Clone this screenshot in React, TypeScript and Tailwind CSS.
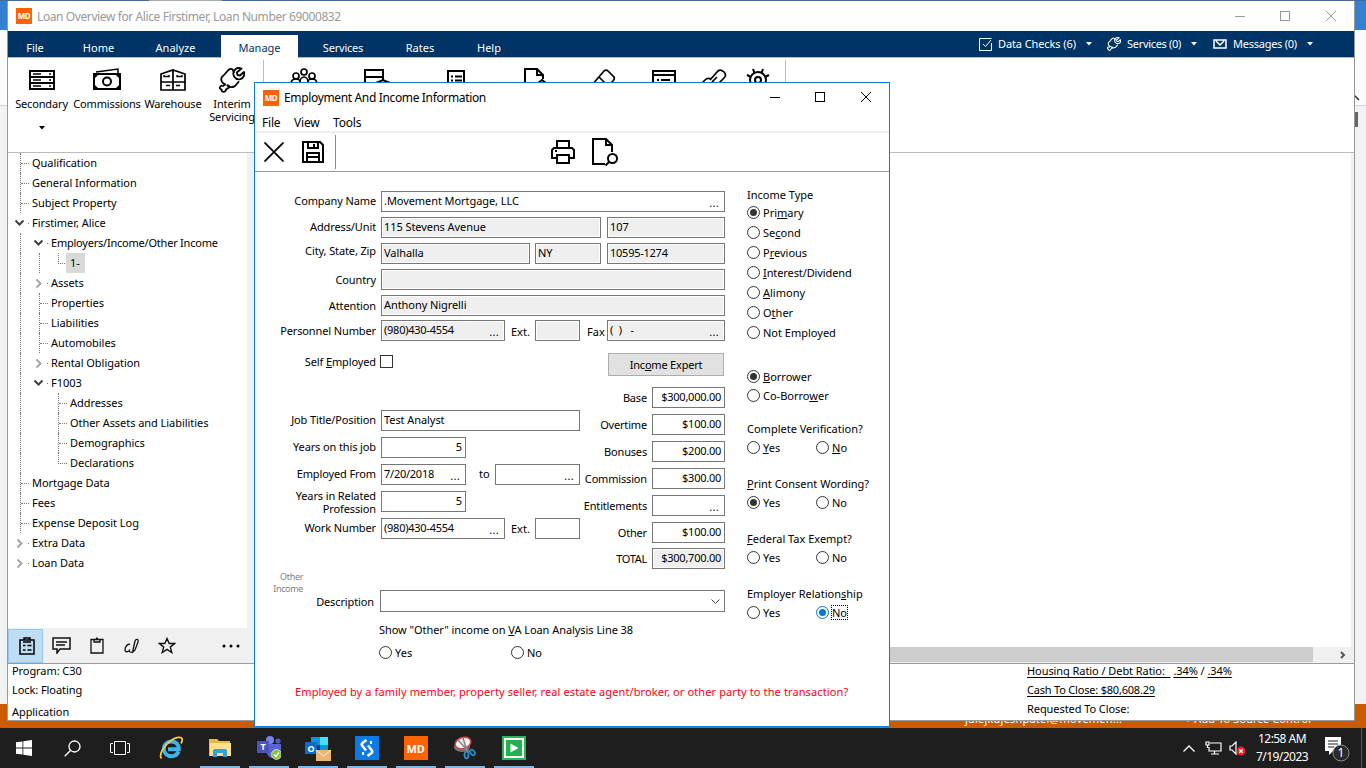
import React from "react";

type Kids = { children?: React.ReactNode };

/* ---------- text helpers ---------- */

/** Renders a caption whose "&" marks the underlined access key. */
function Mn({ t }: { t: string }) {
  const i = t.indexOf("&");
  if (i < 0) return <>{t}</>;
  return (
    <>
      {t.slice(0, i)}
      <span className="underline underline-offset-1">{t[i + 1]}</span>
      {t.slice(i + 2)}
    </>
  );
}

/* ---------- shared icons ---------- */

function MdBadge({ big = false }: { big?: boolean }) {
  return (
    <div
      className={
        big
          ? "flex size-6 items-center justify-center bg-[#ff6200] text-[11px] font-bold tracking-[-0.3px] text-white"
          : "flex size-4 items-center justify-center bg-[#ff6200] pb-px text-[8px] font-bold tracking-[-0.4px] text-white"
      }
    >
      MD
    </div>
  );
}

function Wrench({ size, width }: { size: number; width: number }) {
  return (
    <svg width={size} height={size} viewBox="0 0 26 26" fill="none" stroke="currentColor" strokeWidth={width} strokeLinejoin="round" strokeLinecap="round">
      <path d="M2.500 13.500c-.8-2 .5-4 2-5l5-5.500c1-1 2.500-1.500 4-.5M6 17.500l-2-1.500c-1.500-1-1.500-1.500-1.500-2.500M8.500 18.500l3 1.500c2 .5 3.500 0 5-1.500l3-3.500M15 5l-1.500-2.500" />
      <path d="M22.500 1.500c-3-1.200-6 0-7.500 2.500-1 1.800-.8 4 .3 5.700 1.300 2 3.700 3 6 2.500 3-.8 4.500-4 3.700-7.200l-4 3.500-2.500-.5-.7-2.500z" />
      <path d="M8.500 18.500c1.500 0 2 1 1.500 2l-3 2c0 1.500-1.300 2.500-2.700 2.300-1.300-.2-1.900-1.200-1.800-2.300-1.200-.2-2-1.300-1.500-2.500.5-1.300 1.800-1.700 3-1l2-1.500" />
    </svg>
  );
}

function Caret({ className = "" }: { className?: string }) {
  return (
    <svg className={className} width="6" height="4" viewBox="0 0 6 4" fill="currentColor">
      <path d="M0 0h6L3 3.4z" />
    </svg>
  );
}

function WindowButtons() {
  return (
    <svg width="102" height="12" viewBox="0 0 102 12" fill="none" stroke="currentColor" shapeRendering="crispEdges">
      <path d="M0 6.5h10" />
      <rect x="45.5" y="1.5" width="9" height="9" />
      <path d="M91 1l10 10M101 1L91 11" shapeRendering="auto" />
    </svg>
  );
}

/* ---------- ribbon ---------- */

function RibbonItem({ icon, label, className }: { icon: React.ReactNode; label?: React.ReactNode; className: string }) {
  return (
    <div className={`flex shrink-0 flex-col items-center ${className}`}>
      <div className="flex h-[26px] items-center">{icon}</div>
      <div className="mt-[4px] text-center leading-[13px] tracking-[-0.15px] whitespace-nowrap">{label}</div>
    </div>
  );
}

const icon26 = { width: 28, height: 26, viewBox: "0 0 28 26", fill: "none", stroke: "#000", strokeWidth: 2 } as const;

const SecondaryIcon = () => (
  <svg {...icon26}>
    <path d="M2 4h24v18H2zM2 10h24M2 16h24" />
    <path d="M5 7h8M5 13h8M5 19h8M21 7h2M21 13h2M21 19h2" strokeWidth="1.5" />
  </svg>
);
const MoneyIcon = () => (
  <svg {...icon26}>
    <path d="M1 7h26v15H1z" />
    <path d="M3 5l22-3v4" strokeWidth="1.5" />
    <circle cx="14" cy="14.500" r="4" />
    <path d="M1 7h5l-5 5zM27 7h-5l5 5zM1 22h5l-5-5zM27 22h-5l5-5z" fill="#000" stroke="none" />
  </svg>
);
const WarehouseIcon = () => (
  <svg {...icon26} strokeWidth="1.700">
    <path d="M2 7l12-4 12 4v16H2zM2 15h24M14 3v20" />
    <path d="M5 8v1.500h5V8M18 8v1.500h5V8M7 18.500h4M17 18.500h4" strokeWidth="1.400" />
  </svg>
);
const PeopleIcon = () => (
  <svg {...icon26} strokeWidth="1.700">
    <circle cx="14" cy="5" r="3" />
    <circle cx="6" cy="9" r="3" />
    <circle cx="22" cy="9" r="3" />
    <path d="M1 17c0-3 2-5 5-5s4 2 4 3c0-3 2-5 4-5s4 2 4 5c0-1 1-3 4-3s5 2 5 5" />
  </svg>
);
const PanelIcon = () => (
  <svg {...icon26}>
    <path d="M2 20V3h18v10M2 10h18M13 16l7-3 7 3" />
  </svg>
);
const ListIcon = () => (
  <svg {...icon26}>
    <path d="M6 24V4h16v20z" />
    <path d="M9 9.500h2M13 9.500h7M9 13.500h2M13 13.500h7" />
  </svg>
);
const DocIcon = () => (
  <svg {...icon26}>
    <path d="M4 24V2h12l6 6v4M16 2v6h6M17 16l4-3 4 3" />
  </svg>
);
const EraserIcon = () => (
  <svg {...icon26} strokeWidth="1.700">
    <path d="M3 18L15 4q2-2 4 0l6 6q1 2-1 4l-8 8M10 10l10 10" />
  </svg>
);
const BrowserIcon = () => (
  <svg {...icon26}>
    <path d="M3 24V4h22v12M3 8h22" />
    <path d="M7 13h2M11 13h9M16 16h8" />
  </svg>
);
const LinkIcon = () => (
  <svg {...icon26}>
    <path d="M11 13l7-8c2-3 5-2 7 0s2 4 0 6l-5 5c-2 1-4 1-6-1M18 10l-5 5M12 12c-2-1-4-1-6 1l-4 4" strokeWidth="1.700" />
  </svg>
);
const GearIcon = () => (
  <svg {...icon26}>
    <circle cx="14" cy="13" r="8" />
    <circle cx="14" cy="13" r="3" />
    <path d="M10.500 6L9 2M17.500 6L19 2M7 10L3 8M21 10l4-2" />
  </svg>
);

function Tab({ children, className }: Kids & { className: string }) {
  return <div className={`flex items-center justify-center ${className}`}>{children}</div>;
}

/* ---------- navigation tree ---------- */

type Mark = "leaf" | "end" | "open" | "shut";
type Row = { text: string; level: number; mark: Mark; guides: boolean[]; selected?: boolean };

const rows: Row[] = [
  { text: "Qualification", level: 0, mark: "leaf", guides: [] },
  { text: "General Information", level: 0, mark: "leaf", guides: [] },
  { text: "Subject Property", level: 0, mark: "leaf", guides: [] },
  { text: "Firstimer, Alice", level: 0, mark: "open", guides: [] },
  { text: "Employers/Income/Other Income", level: 1, mark: "open", guides: [true] },
  { text: "1-", level: 2, mark: "end", guides: [true, true], selected: true },
  { text: "Assets", level: 1, mark: "shut", guides: [true] },
  { text: "Properties", level: 1, mark: "leaf", guides: [true] },
  { text: "Liabilities", level: 1, mark: "leaf", guides: [true] },
  { text: "Automobiles", level: 1, mark: "leaf", guides: [true] },
  { text: "Rental Obligation", level: 1, mark: "shut", guides: [true] },
  { text: "F1003", level: 1, mark: "open", guides: [true] },
  { text: "Addresses", level: 2, mark: "leaf", guides: [true, false] },
  { text: "Other Assets and Liabilities", level: 2, mark: "leaf", guides: [true, false] },
  { text: "Demographics", level: 2, mark: "leaf", guides: [true, false] },
  { text: "Declarations", level: 2, mark: "end", guides: [true, false] },
  { text: "Mortgage Data", level: 0, mark: "leaf", guides: [] },
  { text: "Fees", level: 0, mark: "leaf", guides: [] },
  { text: "Expense Deposit Log", level: 0, mark: "leaf", guides: [] },
  { text: "Extra Data", level: 0, mark: "shut", guides: [] },
  { text: "Loan Data", level: 0, mark: "shut", guides: [] },
];

function TreeMark({ mark }: { mark: Mark }) {
  if (mark === "leaf")
    return (
      <div className="flex h-5 w-[9px] items-center border-l border-dotted border-[#777]">
        <div className="w-full border-t border-dotted border-[#777]" />
      </div>
    );
  if (mark === "end")
    return (
      <div className="h-5 w-[9px]">
        <div className="h-[11px] border-b border-l border-dotted border-[#777]" />
      </div>
    );
  return (
    <svg className="-ml-[5px] shrink-0" width="14" height="20" viewBox="0 0 14 20" fill="none" strokeWidth="2">
      {mark === "open" ? <path d="M.500 7.500l4 4 4-4" stroke="#404040" /> : <path d="M2.500 6.500l4 4-4 4" stroke="#a6a6a6" />}
      <path d="M13 10.500h1" stroke="#777" strokeWidth="1" />
    </svg>
  );
}

function TreeRow({ row }: { row: Row }) {
  return (
    <div className="flex h-5 items-center pl-3">
      {row.guides.map((on, i) => (
        <div key={i} className={on ? "h-5 w-[19px] border-l border-dotted border-[#777]" : "h-5 w-[19px]"} />
      ))}
      <TreeMark mark={row.mark} />
      <span
        className={
          row.selected
            ? "-ml-px flex h-5 items-center bg-[#d9d9d9] pr-[5px] pb-[2px] pl-[4px]"
            : row.text.length > 28
              ? "pb-[2px] pl-[3px] tracking-[-0.22px]"
              : "pb-[2px] pl-[3px] tracking-[-0.05px]"
        }
      >
        {row.text}
      </span>
    </div>
  );
}

/* ---------- form controls ---------- */

function Box({ children, className, off = false, dots = false, right = false, tight = false }: Kids & { className: string; off?: boolean; dots?: boolean; right?: boolean; tight?: boolean }) {
  return (
    <div
      className={`flex h-[21px] shrink-0 items-center border border-[#767676] pb-[3px] pl-[2px] whitespace-pre shadow-[inset_0_0_0_1px_#fff] ${off ? "bg-[#efefef]" : "bg-white"} ${right ? "justify-end pr-[3px]" : "pr-[5px]"} ${tight ? "tracking-[-0.25px]" : "tracking-[-0.07px]"} ${className}`}
    >
      <span>{children}</span>
      {dots && <span className="mt-1 ml-auto tracking-[0.3px]">...</span>}
    </div>
  );
}

function Label({ children, className = "" }: Kids & { className?: string }) {
  return <div className={`w-[122px] shrink-0 pr-[1px] text-right tracking-[-0.12px] ${className}`}>{children}</div>;
}

function Radio({ t, on = false, blue = false, className = "" }: { t: string; on?: boolean; blue?: boolean; className?: string }) {
  return (
    <div className={`flex items-center ${className}`}>
      <div className={`flex size-[13px] shrink-0 items-center justify-center rounded-full border ${blue ? "border-[#0078d7]" : "border-[#333]"}`}>
        {on && <div className={`size-[7px] rounded-full ${blue ? "bg-[#0078d7]" : "bg-[#333]"}`} />}
      </div>
      <span className={blue ? "ml-[2px] border border-dotted border-black leading-[13px]" : "ml-[3px]"}>
        <Mn t={t} />
      </span>
    </div>
  );
}

function YesNo({ title, yes, no, yesOn = false, noOn = false }: { title: string; yes: string; no: string; yesOn?: boolean; noOn?: boolean }) {
  return (
    <div className="h-[55px]">
      <div className="h-[19px] leading-[19px]">
        <Mn t={title} />
      </div>
      <div className="flex h-[19px] items-center">
        <Radio t={yes} on={yesOn} className="w-[69px]" />
        <Radio t={no} on={noOn} blue={noOn} />
      </div>
    </div>
  );
}

const amounts: [string, string, boolean][] = [
  ["Base", "$300,000.00", false],
  ["Overtime", "$100.00", false],
  ["Bonuses", "$200.00", false],
  ["Commission", "$300.00", false],
  ["Entitlements", "", true],
  ["Other", "$100.00", false],
];

/* ---------- dialog ---------- */

function Dialog() {
  return (
    <div className="absolute top-[82px] left-[254px] flex h-[645px] w-[636px] flex-col border border-[#0f7bd0] bg-white">
      <div className="flex h-[29px] shrink-0 items-center pr-[17px] pl-2 text-[12px] tracking-[-0.35px]">
        <MdBadge />
        <span className="ml-[5px]">Employment And Income Information</span>
        <div className="-mt-px ml-auto">
          <WindowButtons />
        </div>
      </div>
      <div className="flex h-[19px] shrink-0 items-center pt-px pl-[7px] text-[12px] tracking-[-0.2px]">
        <span className="w-8">File</span>
        <span className="w-[39px]">View</span>
        <span>Tools</span>
      </div>
      <div className="flex h-[41px] shrink-0 items-center border-t-2 border-b border-t-[#f0f0f0] border-b-[#9b9b9b] pl-[9px]">
        <svg width="20" height="20" viewBox="0 0 20 20" stroke="#000" strokeWidth="1.800">
          <path d="M.500 .500l19 19M19.500 .500l-19 19" />
        </svg>
        <svg className="ml-[18px]" width="22" height="22" viewBox="0 0 22 22" fill="none" stroke="#000" strokeWidth="2">
          <path d="M1 1h17l3 3v17H1zM6 1v6h10V1M5 21v-9h12v9M6 16h10" />
          <path d="M12 3v3" />
        </svg>
        <div className="ml-[11px] h-[34px] w-px bg-[#8a8a8a]" />
        <svg className="ml-[215px]" width="24" height="24" viewBox="0 0 24 24" fill="none" stroke="#000" strokeWidth="2">
          <path d="M6 8V1h12v7M6 18H1v-8l2-2h18l2 2v8h-5" />
          <path d="M6 15h12v8H6zM4 11h2" />
        </svg>
        <svg className="ml-[17px]" width="27" height="28" viewBox="0 0 27 28" fill="none" stroke="#000" strokeWidth="2">
          <path d="M13 26H1V1h13l6 6v7M14 1v6h6" />
          <circle cx="20.500" cy="20.500" r="4.500" />
          <path d="M17 24l-3.500 3.500" />
        </svg>
      </div>

      <div className="flex min-h-0 flex-1">
        <div className="w-[470px] shrink-0 pt-[19px]">
          <div className="flex h-[26px]">
            <Label className="leading-[19px]">Company Name</Label>
            <Box className="ml-[4px] w-[344px]" dots>.Movement Mortgage, LLC</Box>
          </div>
          <div className="flex h-[26px]">
            <Label className="leading-[19px]">Address/Unit</Label>
            <Box className="ml-[4px] w-[220px]" off>115 Stevens Avenue</Box>
            <Box className="ml-[6px] w-[118px]" off>107</Box>
          </div>
          <div className="flex h-[26px]">
            <Label className="leading-[15px]">City, State, Zip</Label>
            <Box className="ml-[4px] w-[149px]" off>Valhalla</Box>
            <Box className="ml-[5px] w-[66px]" off>NY</Box>
            <Box className="ml-[6px] w-[118px]" off tight>10595-1274</Box>
          </div>
          <div className="flex h-[26px]">
            <Label className="leading-[21px]">Country</Label>
            <Box className="ml-[4px] w-[344px]" off />
          </div>
          <div className="flex h-[25px]">
            <Label className="leading-[21px]">Attention</Label>
            <Box className="ml-[4px] w-[344px]" off>Anthony Nigrelli</Box>
          </div>
          <div className="flex h-[33px]">
            <Label className="leading-[22px]">Personnel Number</Label>
            <Box className="ml-[4px] w-[124px]" off dots tight>(980)430-4554</Box>
            <span className="w-[30px] pl-[6px] leading-[23px]">Ext.</span>
            <Box className="w-[45px]" off />
            <span className="w-[27px] pl-[7px] leading-[23px]">Fax</span>
            <Box className="w-[118px]" off dots>{"(  )   -"}</Box>
          </div>
          <div className="flex h-[34px]">
            <Label className="leading-[18px]">
              <Mn t="Self &Employed" />
            </Label>
            <div className="mt-[2px] ml-[3px] size-[13px] border border-[#333]" />
            <div className="ml-[215px] flex h-[23px] w-[116px] items-center justify-center border border-[#adadad] bg-[#e1e1e1] tracking-[-0.2px]">
              <span>
                <Mn t="Inc&ome Expert" />
              </span>
            </div>
          </div>

          <div className="flex h-[203px]">
            <div className="w-[325px] shrink-0 pt-[23px]">
              <div className="flex h-[27px]">
                <Label className="leading-[20px]">Job Title/Position</Label>
                <Box className="ml-[4px] w-[199px]">Test Analyst</Box>
              </div>
              <div className="flex h-[27px]">
                <Label className="leading-[20px]">Years on this job</Label>
                <Box className="ml-[4px] w-[85px]" right>5</Box>
              </div>
              <div className="flex h-[27px]">
                <Label className="leading-[20px]">Employed From</Label>
                <Box className="ml-[4px] w-[85px]" dots tight>7/20/2018</Box>
                <span className="w-[29px] pl-[13px] leading-[20px]">to</span>
                <Box className="w-[85px]" dots />
              </div>
              <div className="flex h-[27px]">
                <Label className="-mt-[2px] leading-[13px]">
                  Years in Related
                  <br />
                  Profession
                </Label>
                <Box className="ml-[4px] w-[85px]" right>5</Box>
              </div>
              <div className="flex h-[27px]">
                <Label className="leading-[20px]">Work Number</Label>
                <Box className="ml-[4px] w-[124px]" dots tight>(980)430-4554</Box>
                <span className="w-[30px] pl-[6px] leading-[22px]">Ext.</span>
                <Box className="w-[45px]" />
              </div>
            </div>
            <div className="flex-1">
              {amounts.map(([name, value, dots]) => (
                <div key={name} className="flex h-[27px] justify-end">
                  <span className="pr-[5px] leading-[22px] tracking-[-0.17px]">{name}</span>
                  <Box className="w-[73px]" right={!dots} dots={dots} tight>{value}</Box>
                </div>
              ))}
              <div className="-mt-px flex h-[27px] justify-end">
                <span className="pr-[5px] leading-[22px] tracking-[-0.3px]">TOTAL</span>
                <Box className="w-[73px]" off right tight>$300,700.00</Box>
              </div>
            </div>
          </div>

          <div className="-mt-[19px] w-12 text-right text-[9px] leading-[12px] tracking-[-0.35px] text-[#7f7f7f]">
            Other
            <br />
            Income
          </div>
          <div className="-mt-[5px] flex h-[31px]">
            <Label className="-ml-[2px] leading-[24px]">Description</Label>
            <div className="ml-[5px] flex h-[22px] w-[345px] items-center justify-end border border-[#767676] pt-px pr-1">
              <svg width="9" height="6" viewBox="0 0 9 6" fill="none" stroke="#444">
                <path d="M.500 .500l4 4 4-4" />
              </svg>
            </div>
          </div>
          <div className="pl-[124px] leading-[18px] tracking-[-0.05px]">
            <Mn t={'Show "Other" income on &VA Loan Analysis Line 38'} />
          </div>
          <div className="mt-[6px] flex pl-[124px]">
            <Radio t="Yes" className="w-[132px]" />
            <Radio t="No" />
          </div>
          <div className="mt-[24px] pl-10 tracking-[0.115px] whitespace-nowrap text-[#ff0010]">
            Employed by a family member, property seller, real estate agent/broker, or other party to the transaction?
          </div>
        </div>

        <div className="min-w-0 flex-1 pt-[13px] pl-[22px] whitespace-nowrap">
          <div className="h-[17px] leading-[20px]">Income Type</div>
          <Radio className="h-5" t="Pri&mary" on />
          <Radio className="h-5" t="Se&cond" />
          <Radio className="h-5" t="P&revious" />
          <Radio className="h-5 tracking-[-0.1px]" t="&Interest/Dividend" />
          <Radio className="h-5" t="&Alimony" />
          <Radio className="h-5" t="O&ther" />
          <Radio className="h-5" t="Not Employed" />
          <Radio className="mt-[25px] h-[19px]" t="&Borrower" on />
          <Radio className="h-[19px]" t="Co-Borro&wer" />
          <div className="mt-[14px]">
            <YesNo title="Complete Verification?" yes="&Yes" no="&No" />
            <YesNo title="&Print Consent Wording?" yes="Yes" no="No" yesOn />
            <YesNo title="&Federal Tax Exempt?" yes="Yes" no="No" />
            <YesNo title="Employer Relation&ship" yes="Yes" no="No" noOn />
          </div>
        </div>
      </div>
    </div>
  );
}

/* ---------- main window ---------- */

function MainWindow() {
  return (
    <div className="absolute top-px left-[7px] flex h-[720px] w-[1348px] flex-col border-x border-b border-[#999] bg-white">
      <div className="flex h-[30px] shrink-0 items-center pr-[17px] pl-2 text-[12px] tracking-[-0.4px] text-[#999]">
        <MdBadge />
        <span className="ml-[5px]">Loan Overview for Alice Firstimer, Loan Number 69000832</span>
        <div className="-mt-px ml-auto">
          <WindowButtons />
        </div>
      </div>

      <div className="flex h-[27px] shrink-0 border-b border-[#b3b7c4] bg-[#003366] pr-[41px] text-white">
        <Tab className="w-[54px] pt-[6px]">File</Tab>
        <Tab className="w-[73px] pt-[7px]">Home</Tab>
        <Tab className="mr-[5px] w-[81px] pt-[7px]">Analyze</Tab>
        <Tab className="mt-1 mr-[5px] -mb-px w-[77px] bg-white pt-[2px] text-[#003366]">Manage</Tab>
        <Tab className="w-[80px] pt-[7px] tracking-[-0.2px]">Services</Tab>
        <Tab className="w-[74px] pt-[7px]">Rates</Tab>
        <Tab className="w-[64px] pt-[7px]">Help</Tab>
        <div className="ml-auto flex items-center tracking-[-0.1px]">
          <svg width="13" height="13" viewBox="0 0 13 13" fill="none" stroke="#fff">
            <path d="M12.500 5v7.500H.500V.500h12M4 6l2.500 2.500L12 2" />
          </svg>
          <span className="-mt-px ml-[6px] w-[88px]">Data Checks (6)</span>
          <Caret className="mr-[15px]" />
          <Wrench size={14} width={2} />
          <span className="-mt-px ml-[6px] w-[64px] tracking-[-0.3px]">Services (0)</span>
          <Caret className="mr-[16px]" />
          <svg width="14" height="10" viewBox="0 0 14 10" fill="none" stroke="#fff" strokeWidth="1.500">
            <path d="M1 1h12v8H1zM3 2l4 4 4-4" />
          </svg>
          <span className="-mt-px ml-[6px] w-[74px] tracking-[-0.25px]">Messages (0)</span>
          <Caret />
        </div>
      </div>

      <div className="flex h-[95px] shrink-0 items-start overflow-hidden border-b border-[#bcbcbc] pt-[9px]">
        <RibbonItem
          className="w-[67px]"
          icon={<SecondaryIcon />}
          label={
            <>
              Secondary
              <Caret className="mx-auto mt-4" />
            </>
          }
        />
        <RibbonItem className="w-[64px]" icon={<MoneyIcon />} label="Commissions" />
        <RibbonItem className="w-[68px]" icon={<WarehouseIcon />} label="Warehouse" />
        <RibbonItem
          className="mr-[6px] w-[50px]"
          icon={<Wrench size={26} width={1.8} />}
          label={
            <>
              Interim
              <br />
              Servicing
            </>
          }
        />
        <div className="-mt-[7px] h-[86px] w-px bg-[#bcbcbc]" />
        <RibbonItem className="w-[80px]" icon={<PeopleIcon />} />
        <RibbonItem className="w-[66px]" icon={<PanelIcon />} />
        <RibbonItem className="w-[92px]" icon={<ListIcon />} />
        <RibbonItem className="w-[66px]" icon={<DocIcon />} />
        <RibbonItem className="w-[70px]" icon={<EraserIcon />} />
        <RibbonItem className="w-[52px]" icon={<BrowserIcon />} />
        <RibbonItem className="w-[46px]" icon={<LinkIcon />} />
        <RibbonItem className="mr-[5px] w-[44px]" icon={<GearIcon />} />
        <div className="-mt-[7px] h-[86px] w-px bg-[#bcbcbc]" />
      </div>

      <div className="flex h-[511px] shrink-0 border-b border-[#9b9b9b]">
        <div className="flex w-[247px] shrink-0 flex-col bg-[#f0f0f0]">
          <div className="h-[475px] w-[239px] bg-white">
            {rows.map((r) => (
              <TreeRow key={r.text} row={r} />
            ))}
          </div>
          <div className="flex flex-1 items-center text-[#111]">
            <div className="flex h-[34px] w-[35px] items-center justify-center border border-[#90c8f6] bg-[#c0dcf3] pl-[3px]">
              <svg width="16" height="18" viewBox="0 0 16 18" fill="none" stroke="#000" strokeWidth="1.500">
                <path d="M1 3h14v14H1zM5 3V1h6v2M4 5h8M4 8.500h2.500M8.500 8.500h4M4 13h2.500M8.500 13h4" />
              </svg>
            </div>
            <svg className="ml-[9px]" width="19" height="17" viewBox="0 0 19 17" fill="none" stroke="currentColor" strokeWidth="1.500">
              <path d="M1 1h17v11H8l-3 4v-4H1zM4 5h11M4 8h9" />
            </svg>
            <svg className="ml-[19px]" width="14" height="17" viewBox="0 0 14 17" fill="none" stroke="currentColor" strokeWidth="1.300">
              <path d="M1 2.500h12V16H1zM4 5V2.500h2L7 1l1 1.500h2V5z" />
            </svg>
            <svg className="ml-[20px]" width="16" height="16" viewBox="0 0 16 16" fill="none" stroke="currentColor" strokeWidth="1.300">
              <path d="M6 6.500c-2-1-5 2-5 5s3 3 5 0M9 12l2-9c1-2.500 4-2 3 1l-3 8-2 2zM5 13c1 1.500 2 1.500 4 1" />
            </svg>
            <svg className="ml-[18px]" width="18" height="17" viewBox="0 0 18 17" fill="none" stroke="currentColor" strokeWidth="1.400">
              <path d="M9 1.500l2.200 5h5.300l-4.200 3.600 1.500 5.400L9 12.300l-4.800 3.200 1.500-5.400L1.500 6.500h5.300z" />
            </svg>
            <svg className="ml-[46px]" width="18" height="4" viewBox="0 0 18 4" fill="#000">
              <circle cx="2" cy="2" r="1.500" />
              <circle cx="9" cy="2" r="1.500" />
              <circle cx="16" cy="2" r="1.500" />
            </svg>
          </div>
        </div>
        <div className="flex flex-1 flex-col bg-[#f0f0f0]">
          <div className="mr-[3px] h-[494px] bg-white" />
          <div className="flex h-[15px] items-center pr-[8px]">
            <div className="h-full w-[1058px] bg-[#cdcdcd]" />
            <svg className="ml-auto" width="6" height="8" viewBox="0 0 6 8" fill="none" stroke="#555" strokeWidth="2">
              <path d="M1 1l3 3-3 3" />
            </svg>
          </div>
        </div>
      </div>

      <div className="flex flex-1 pl-1 tracking-[-0.07px]">
        <div className="-mt-px w-[1015px]">
          <div className="h-[18px] leading-[15px]">Program: C30</div>
          <div className="h-[21px] leading-[17px]">Lock: Floating</div>
          <div className="leading-[19px]">Application</div>
        </div>
        <div className="-mt-px">
          <div className="h-[18px] leading-[15px]">
            <span className="underline underline-offset-2 whitespace-pre">Housing Ratio / Debt Ratio:  </span>
            <span className="ml-[3px] underline underline-offset-2">.34%</span> / <span className="underline underline-offset-2">.34%</span>
          </div>
          <div className="h-[20px] leading-[17px] tracking-[-0.2px] underline underline-offset-2">Cash To Close: $80,608.29</div>
          <div className="leading-[15px]">Requested To Close:</div>
        </div>
      </div>
    </div>
  );
}

/* ---------- taskbar ---------- */

function TaskCell({ children, running = false }: Kids & { running?: boolean }) {
  return (
    <div className="flex h-10 w-[49px] shrink-0 flex-col items-center">
      <div className="flex h-[38px] items-center pt-[2px]">{children}</div>
      {running && <div className="h-[2px] w-10 bg-[#76b9ed]" />}
    </div>
  );
}

function Taskbar() {
  return (
    <div className="absolute top-[728px] left-0 flex h-10 w-[1366px] bg-[#1e1e1e] text-white">
      <div className="flex w-12 items-center justify-center">
        <svg width="16" height="16" viewBox="0 0 16 16" fill="#fff">
          <path d="M0 2.300l6.500-.9v6.200H0zM7.300 1.300L16 0v7.600H7.300zM0 8.400h6.500v6.200L0 13.700zM7.300 8.400H16V16l-8.700-1.300z" />
        </svg>
      </div>
      <div className="flex w-12 items-center justify-center">
        <svg width="17" height="17" viewBox="0 0 17 17" fill="none" stroke="#fff" strokeWidth="1.300">
          <circle cx="10.500" cy="6.500" r="5.500" />
          <path d="M6.500 10.500L.700 16.300" />
        </svg>
      </div>
      <div className="flex w-[50px] items-center justify-center pr-[2px]">
        <svg width="20" height="14" viewBox="0 0 20 14" fill="none" stroke="#fff">
          <path d="M4.500 .500h11v13h-11zM3 2.500H.500v9H3M17 2.500h2.500v9H17" />
        </svg>
      </div>
      <TaskCell>
        <svg width="24" height="24" viewBox="0 0 24 24" fill="none">
          <path d="M19.500 15.500c-1.200 3-3.700 4.700-7 4.700-4.500 0-7.700-3.200-7.700-7.400s3.200-7.300 7.700-7.300c4.800 0 7.500 3.500 7.300 7.800H9" stroke="#3db4ea" strokeWidth="4" />
          <path d="M2.500 22.500C-.5 19 4.500 9.500 12 4.500c5-3.500 10-4 11-2 .6 1 0 3-1 5" stroke="#f5c84a" strokeWidth="1.800" />
        </svg>
      </TaskCell>
      <TaskCell running>
        <svg width="22" height="18" viewBox="0 0 22 18">
          <path d="M0 0h8l2 2h11v15H0z" fill="#e9b64c" />
          <path d="M1 4h21v13H1z" fill="#fbe08d" />
          <path d="M4 18v-6q0-2 2-2h10q2 0 2 2v6h-4v-4H8v4z" fill="#2ea3dc" />
        </svg>
      </TaskCell>
      <TaskCell running>
        <svg width="24" height="24" viewBox="0 0 24 24">
          <circle cx="13" cy="4" r="4" fill="#7b83eb" />
          <circle cx="21" cy="5" r="2.600" fill="#5059c9" />
          <path d="M10 8h14v8q-1 6-8 6-5 0-6-5z" fill="#5b63d3" />
          <path d="M0 5h12v12H0z" fill="#4b53bc" />
          <text x="6" y="14" fontSize="9" fontWeight="700" textAnchor="middle" fill="#fff">T</text>
          <circle cx="19.500" cy="18.500" r="5" fill="#8ac53f" stroke="#fff" strokeWidth=".6" />
          <path d="M17 18.500l2 2 3-4" stroke="#fff" strokeWidth="1.300" fill="none" />
        </svg>
      </TaskCell>
      <TaskCell running>
        <svg width="26" height="25" viewBox="0 0 26 25">
          <path d="M6 1h17v16H6z" fill="#1490df" />
          <path d="M15 1h8v8h-8z" fill="#50d9ff" />
          <path d="M6 9h9v8H6z" fill="#0a3f88" />
          <path d="M0 6h12v12H0z" fill="#0f6cc4" />
          <text x="6" y="15.500" fontSize="9" fontWeight="700" textAnchor="middle" fill="#fff">O</text>
          <path d="M11 14h15v11H11z" fill="#edb572" />
          <path d="M11 14l7.500 6 7.500-6" stroke="#fff4e0" fill="none" />
        </svg>
      </TaskCell>
      <TaskCell running>
        <svg width="24" height="24" viewBox="0 0 24 24" fill="none">
          <path d="M0 0h24v24H0z" fill="#0a7be4" />
          <path d="M11.500 4L7.500 7q-1.500 1.500 0 3l3.500 4.500M12.500 20l4-3q1.500-1.500 0-3L13 9.500" stroke="#fff" strokeWidth="2.600" />
          <path d="M16 5v3M8 16v3" stroke="#fff" strokeWidth="2" />
        </svg>
      </TaskCell>
      <TaskCell running>
        <MdBadge big />
      </TaskCell>
      <TaskCell running>
        <svg width="22" height="24" viewBox="0 0 22 24" fill="none">
          <ellipse cx="8" cy="11" rx="8" ry="5" fill="#777" />
          <ellipse cx="9" cy="7" rx="8" ry="5.500" fill="#f3f3f3" stroke="#cf4545" strokeWidth="1.500" transform="rotate(-18 9 7)" />
          <path d="M4 4l11 12M9 2l4 13" stroke="#888" strokeWidth="1.600" />
          <ellipse cx="12.500" cy="19" rx="2" ry="3.500" stroke="#2c92cf" strokeWidth="1.700" />
          <ellipse cx="18.500" cy="16.500" rx="2" ry="3" stroke="#2c92cf" strokeWidth="1.700" transform="rotate(-40 18.500 16.500)" />
        </svg>
      </TaskCell>
      <TaskCell running>
        <svg width="24" height="24" viewBox="0 0 24 24">
          <path d="M0 0h24v24H0z" fill="#2bb657" />
          <path d="M3 3h18v18H3z" fill="#23b050" stroke="#fff" strokeWidth="2" />
          <path d="M8.500 7.500v9l8-4.500z" fill="#fff" />
        </svg>
      </TaskCell>

      <div className="ml-auto flex items-center">
        <svg width="12" height="7" viewBox="0 0 12 7" fill="none" stroke="#fff" strokeWidth="1.300">
          <path d="M.500 6.500L6 1l5.500 5.500" />
        </svg>
        <svg className="ml-[10px]" width="17" height="14" viewBox="0 0 17 14" fill="none" stroke="#fff" strokeWidth="1.200">
          <path d="M5 2h11v8H4V6M9.500 10v3M6 13h8M1 1h3v3H1zM2.500 4v3" />
        </svg>
        <svg className="ml-[7px]" width="17" height="15" viewBox="0 0 17 15" fill="none">
          <path d="M1 5h2l4-4v12L3 9H1z" stroke="#fff" strokeWidth="1.200" />
          <circle cx="12" cy="10" r="4.500" fill="#e3202b" />
          <path d="M10.300 8.300l3.400 3.400M13.700 8.300l-3.400 3.400" stroke="#fff" strokeWidth="1.300" />
        </svg>
        <div className="ml-[9px] w-[54px] text-center text-[12px] leading-[18px] tracking-[-0.55px] whitespace-nowrap">
          12:58 AM
          <br />
          7/19/2023
        </div>
        <svg className="mt-1 ml-[16px]" width="25" height="26" viewBox="0 0 25 26">
          <path d="M0 0h16v14H8l-4 4v-4H0z" fill="#fff" />
          <path d="M3 4h10M3 7h10M3 10h6" stroke="#1e1e1e" />
          <circle cx="16" cy="16" r="8" fill="#2b2b2b" stroke="#8a8a8a" />
          <text x="16" y="20" fontSize="12" textAnchor="middle" fill="#fff">1</text>
        </svg>
        <div className="ml-[11px] h-10 w-px bg-[#5a5a5a]" />
        <div className="w-1" />
      </div>
    </div>
  );
}

/* ---------- desktop ---------- */

export default function App() {
  return (
    <div className="relative h-[768px] w-[1366px] overflow-hidden bg-[#f0f2f3] font-['Noto_Sans','Segoe_UI',sans-serif] text-[11px] leading-[15px] text-black">
      <div className="flex h-[728px] flex-col">
        <div className="flex h-[30px] bg-[#3381d0]">
          <div className="h-px w-[149px] bg-[#42699a]" />
          <div className="h-px w-[73px] bg-[#aaa]" />
          <div className="h-px flex-1 bg-[#42699a]" />
        </div>
        <div className="flex h-[76px] justify-end border-b border-[#d4d4d4] bg-[#fbfbfb]">
          <svg className="mt-[64px]" width="12" height="8" viewBox="0 0 12 8" stroke="#222" strokeWidth="1.300">
            <path d="M0 1l5 5" />
          </svg>
        </div>
        <div className="flex flex-1 justify-end">
          <div className="mt-[6px] mr-[8px] h-[15px] w-1 bg-[#666]" />
        </div>
        <div className="flex h-6 items-center bg-[#ca5b00] pt-[5px] pl-[965px] whitespace-nowrap text-white">
          <span className="w-[220px] tracking-[0.2px]">julejkujeshpatel@movemen...</span>
          <span className="tracking-[0.1px]">+ Add To Source Control</span>
        </div>
      </div>
      <MainWindow />
      <Dialog />
      <Taskbar />
    </div>
  );
}
